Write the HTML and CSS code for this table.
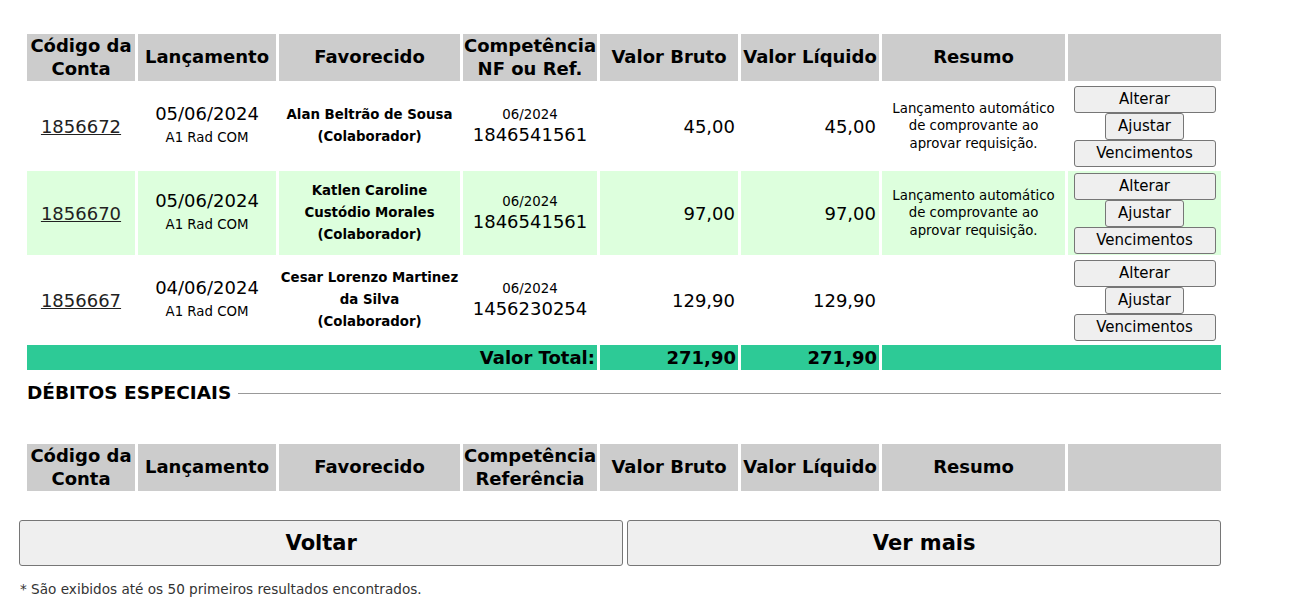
FILE: index.html
```html
<!DOCTYPE html>
<html lang="pt-BR">
<head>
    <meta charset="UTF-8">
    <meta name="viewport" content="width=device-width, initial-scale=1.0">
    <title>Lançamentos</title>
    <link rel="stylesheet" href="styles.css">
</head>
<body>
    <div class="pagina">
        <table class="lista">
            <colgroup>
                <col class="c-codigo">
                <col class="c-lanc">
                <col class="c-fav">
                <col class="c-comp">
                <col class="c-valor">
                <col class="c-valor">
                <col class="c-resumo">
                <col>
            </colgroup>
            <thead>
                <tr>
                    <th>Código da Conta</th>
                    <th>Lançamento</th>
                    <th>Favorecido</th>
                    <th>Competência NF ou Ref.</th>
                    <th>Valor Bruto</th>
                    <th>Valor Líquido</th>
                    <th>Resumo</th>
                    <th></th>
                </tr>
            </thead>
            <tbody>
                <tr>
                    <td><a href="#" class="conta">1856672</a></td>
                    <td><div class="data">05/06/2024</div><div class="sub">A1 Rad COM</div></td>
                    <td class="favorecido">Alan Beltrão de Sousa<br>(Colaborador)</td>
                    <td><div class="comp">06/2024</div><div class="nf">1846541561</div></td>
                    <td class="valor">45,00</td>
                    <td class="valor">45,00</td>
                    <td class="resumo">Lançamento automático de comprovante ao aprovar requisição.</td>
                    <td>
                        <div class="botoes">
                            <button class="btn largo">Alterar</button>
                            <button class="btn">Ajustar</button>
                            <button class="btn largo">Vencimentos</button>
                        </div>
                    </td>
                </tr>
                <tr class="destaque">
                    <td><a href="#" class="conta">1856670</a></td>
                    <td><div class="data">05/06/2024</div><div class="sub">A1 Rad COM</div></td>
                    <td class="favorecido">Katlen Caroline<br>Custódio Morales<br>(Colaborador)</td>
                    <td><div class="comp">06/2024</div><div class="nf">1846541561</div></td>
                    <td class="valor">97,00</td>
                    <td class="valor">97,00</td>
                    <td class="resumo">Lançamento automático de comprovante ao aprovar requisição.</td>
                    <td>
                        <div class="botoes">
                            <button class="btn largo">Alterar</button>
                            <button class="btn">Ajustar</button>
                            <button class="btn largo">Vencimentos</button>
                        </div>
                    </td>
                </tr>
                <tr>
                    <td><a href="#" class="conta">1856667</a></td>
                    <td><div class="data">04/06/2024</div><div class="sub">A1 Rad COM</div></td>
                    <td class="favorecido">Cesar Lorenzo Martinez<br>da Silva<br>(Colaborador)</td>
                    <td><div class="comp">06/2024</div><div class="nf">1456230254</div></td>
                    <td class="valor">129,90</td>
                    <td class="valor">129,90</td>
                    <td class="resumo"></td>
                    <td>
                        <div class="botoes">
                            <button class="btn largo">Alterar</button>
                            <button class="btn">Ajustar</button>
                            <button class="btn largo">Vencimentos</button>
                        </div>
                    </td>
                </tr>
                <tr class="total">
                    <td colspan="4">Valor Total:</td>
                    <td>271,90</td>
                    <td>271,90</td>
                    <td colspan="2"></td>
                </tr>
            </tbody>
        </table>

        <div class="secao">
            <span>DÉBITOS ESPECIAIS</span>
        </div>

        <table class="lista">
            <colgroup>
                <col class="c-codigo">
                <col class="c-lanc">
                <col class="c-fav">
                <col class="c-comp">
                <col class="c-valor">
                <col class="c-valor">
                <col class="c-resumo">
                <col>
            </colgroup>
            <thead>
                <tr>
                    <th>Código da Conta</th>
                    <th>Lançamento</th>
                    <th>Favorecido</th>
                    <th>Competência Referência</th>
                    <th>Valor Bruto</th>
                    <th>Valor Líquido</th>
                    <th>Resumo</th>
                    <th></th>
                </tr>
            </thead>
        </table>

        <div class="acoes">
            <button class="btn-grande voltar">Voltar</button>
            <button class="btn-grande">Ver mais</button>
        </div>

        <p class="nota">* São exibidos até os 50 primeiros resultados encontrados.</p>
    </div>
</body>
</html>
```

FILE: styles.css
```css
/* página */
body {
    margin: 8px;
    background: #ffffff;
    color: #000000;
    font-family: "DejaVu Sans", Verdana, sans-serif;
}

.pagina {
    width: 1202px;
    padding-left: 11px;
}

/* tabelas de lançamentos */
.lista {
    width: 1200px;
    margin-left: 5px;
    table-layout: fixed;
    border-collapse: separate;
    border-spacing: 3px;
}

.lista:first-child {
    margin-top: 23px;
}

.c-codigo { width: 108px; }
.c-lanc   { width: 138px; }
.c-fav    { width: 181px; }
.c-comp   { width: 134px; }
.c-valor  { width: 138px; }
.c-resumo { width: 183px; }

.lista th {
    background-color: #cccccc;
    font-size: 18px;
    font-weight: bold;
    line-height: 22.5px;
    padding: 1px;
    text-align: center;
    vertical-align: middle;
}

.lista td {
    padding: 1px;
    text-align: center;
    vertical-align: middle;
    height: 82px;
}

.destaque td {
    background-color: #ddffdd;
}

.conta {
    color: #222222;
    font-size: 18px;
}

.data {
    font-size: 18px;
    line-height: 24px;
}

.sub {
    font-size: 13.33px;
    line-height: 24px;
}

.favorecido {
    font-size: 13.33px;
    font-weight: bold;
    line-height: 22px;
}

.comp {
    font-size: 13.33px;
    line-height: 18px;
}

.nf {
    font-size: 18px;
    line-height: 22px;
}

.lista td.valor {
    font-size: 18px;
    text-align: right;
    padding-right: 3px;
}

.resumo {
    font-size: 13.33px;
    line-height: 17.5px;
}

/* botões da linha */
.botoes {
    display: flex;
    flex-direction: column;
    align-items: center;
}

.btn {
    height: 27px;
    padding: 0 12px;
    font-family: "DejaVu Sans", Verdana, sans-serif;
    font-size: 15px;
    color: #000000;
    background-color: #efefef;
    border: 1px solid #767676;
    border-radius: 3px;
}

.btn.largo {
    width: 142px;
}

/* linha de total */
.lista tr.total td {
    height: 23px;
    background-color: #2dca96;
    font-size: 18px;
    font-weight: bold;
    line-height: 23px;
    text-align: right;
    padding-right: 2px;
}

/* título de seção */
.secao {
    display: flex;
    align-items: center;
    gap: 7px;
    margin: 10px 0 0 8px;
    font-size: 18.5px;
    font-weight: bold;
    line-height: 20px;
}

.secao::after {
    content: "";
    flex: 1;
    border-top: 1px solid #999999;
}

.secao + .lista {
    margin-top: 38px;
}

/* ações */
.acoes {
    display: flex;
    gap: 4px;
    margin-top: 26px;
}

.btn-grande {
    height: 46px;
    flex: 594;
    font-family: "DejaVu Sans", Verdana, sans-serif;
    font-size: 21px;
    font-weight: bold;
    color: #000000;
    background-color: #efefef;
    border: 1px solid #767676;
    border-radius: 3px;
}

.btn-grande.voltar {
    flex: 605;
}

.nota {
    margin: 15px 0 0 1px;
    font-size: 13.6px;
    color: #333333;
}
```
